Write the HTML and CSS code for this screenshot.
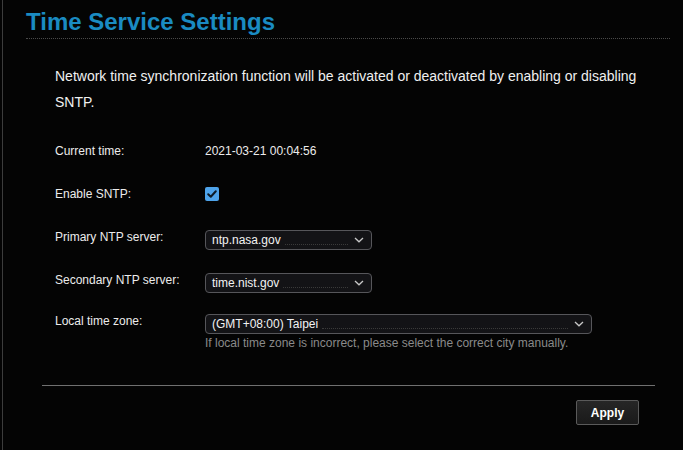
FILE: index.html
```html
<!DOCTYPE html>
<html lang="en">
<head>
  <meta charset="UTF-8">
  <meta name="viewport" content="width=device-width, initial-scale=1.0">
  <title>Time Service Settings</title>
  <link rel="stylesheet" href="styles.css">
</head>
<body>
  <div id="page">
    <h2 class="title">Time Service Settings</h2>

    <p class="intro">Network time synchronization function will be activated or deactivated by enabling or disabling SNTP.</p>

    <div class="form-grid">
      <div class="row">
        <span class="label">Current time:</span>
        <span class="value">2021-03-21 00:04:56</span>
      </div>

      <div class="row">
        <span class="label">Enable SNTP:</span>
        <span class="check">
          <svg width="14" height="14" viewBox="0 0 14 14"><path d="M3.2 7.2 L5.8 9.7 L10.8 4.3" fill="none" stroke="#0d1a26" stroke-width="2" stroke-linecap="round" stroke-linejoin="round"/></svg>
        </span>
      </div>

      <div class="row">
        <span class="label">Primary NTP server:</span>
        <div class="select small">
          <span class="opt">ntp.nasa.gov</span><span class="dots"></span>
          <svg class="chev" width="10" height="6" viewBox="0 0 10 6"><path d="M1 1 L5 4.8 L9 1" fill="none" stroke="#c8c8c8" stroke-width="1.3"/></svg>
        </div>
      </div>

      <div class="row">
        <span class="label">Secondary NTP server:</span>
        <div class="select small">
          <span class="opt">time.nist.gov</span><span class="dots"></span>
          <svg class="chev" width="10" height="6" viewBox="0 0 10 6"><path d="M1 1 L5 4.8 L9 1" fill="none" stroke="#c8c8c8" stroke-width="1.3"/></svg>
        </div>
      </div>

      <div class="row row-tz">
        <span class="label">Local time zone:</span>
        <div class="value-col">
          <div class="select wide">
            <span class="opt">(GMT+08:00) Taipei</span><span class="dots"></span>
            <svg class="chev" width="10" height="6" viewBox="0 0 10 6"><path d="M1 1 L5 4.8 L9 1" fill="none" stroke="#c8c8c8" stroke-width="1.3"/></svg>
          </div>
          <div class="hint">If local time zone is incorrect, please select the correct city manually.</div>
        </div>
      </div>
    </div>

    <hr class="divider">

    <div class="actions">
      <button type="button" class="apply">Apply</button>
    </div>
  </div>
</body>
</html>
```

FILE: styles.css
```css
html, body {
  margin: 0;
  height: 100%;
  background-color: #040404;
}
body {
  font-family: "Liberation Sans", Arial, sans-serif;
  color: #ececec;
}
#page {
  margin-left: 2px;
  min-height: 100%;
  border-left: 1px solid #3c3c3c;
  box-sizing: border-box;
  padding: 8px 13px 0 23px;
}
.title {
  margin: 0;
  font-size: 24px;
  line-height: 27px;
  font-weight: bold;
  color: #1a8bc2;
  padding-bottom: 3px;
  border-bottom: 1px dotted #4a4a4a;
}
.intro {
  margin: 24px 0 0 0;
  padding: 0 10px 0 29px;
  font-size: 14px;
  line-height: 26px;
  color: #f0f0f0;
}
.form-grid {
  display: flex;
  flex-direction: column;
  padding-left: 29px;
  margin-top: 14px;
}
.row {
  display: flex;
  align-items: center;
  height: 43px;
  font-size: 12px;
}
.label {
  width: 150px;
  flex: none;
  line-height: 14px;
}
.value {
  line-height: 14px;
}
.check {
  display: flex;
  width: 14px;
  height: 14px;
  border-radius: 2px;
  background-color: #4ea3ea;
}
.select {
  display: flex;
  align-items: center;
  height: 20px;
  box-sizing: border-box;
  padding: 0 7px 0 6px;
  border: 1px solid #56565a;
  border-radius: 4px;
  background-color: #131316;
  color: #f2f2f2;
  font-size: 12px;
}
.select.small {
  width: 167px;
  margin-top: 6px;
}
.select.wide {
  width: 387px;
}
.opt {
  white-space: nowrap;
}
.dots {
  flex: 1;
  align-self: flex-end;
  margin: 0 6px 4px 4px;
  border-bottom: 1px dotted #3a3a3a;
}
.chev {
  flex: none;
}
.row-tz {
  align-items: flex-start;
  height: auto;
  margin-top: 13px;
}
.value-col {
  display: flex;
  flex-direction: column;
}
.hint {
  margin-top: 2px;
  font-size: 12px;
  line-height: 14px;
  color: #8a8a8a;
}
.divider {
  margin: 35px 15px 0 16px;
  border: none;
  border-top: 1px solid #707070;
  height: 0;
}
.actions {
  display: flex;
  justify-content: flex-end;
  padding: 14px 31px 0 0;
}
.apply {
  width: 63px;
  height: 25px;
  padding: 0;
  border: 1px solid #5a5a5a;
  border-radius: 2px;
  background: linear-gradient(#262626, #1a1a1a);
  color: #ffffff;
  font-family: "Liberation Sans", Arial, sans-serif;
  font-size: 12px;
  font-weight: bold;
  cursor: pointer;
}
```
